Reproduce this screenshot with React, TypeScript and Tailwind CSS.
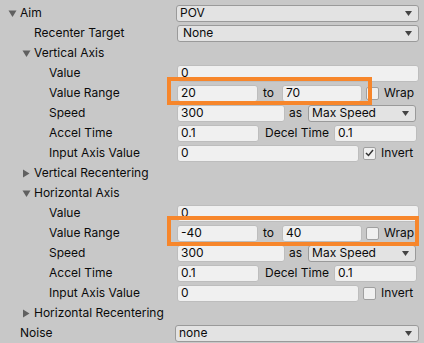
import React from "react";

const Tri = ({ down }: { down: boolean }) =>
  down ? (
    <svg width="9" height="9" viewBox="0 0 9 9" className="shrink-0">
      <path d="M0.5 1.5 L8.5 1.5 L4.5 8 Z" fill="#606060" />
    </svg>
  ) : (
    <svg width="9" height="9" viewBox="0 0 9 9" className="shrink-0">
      <path d="M1 0.5 L7.5 4.5 L1 8.5 Z" fill="#606060" />
    </svg>
  );

const Field = ({ v, className = "" }: { v: string; className?: string }) => (
  <div
    className={
      "h-[17px] rounded-[3px] border border-[#bdbdbd] bg-[#f0f0f0] pl-[3px] flex items-center text-[12px] text-[#0b0b0b] shrink-0 " +
      className
    }
  >
    {v}
  </div>
);

const Drop = ({ v, className = "", pl = "pl-[3px]" }: { v: string; className?: string; pl?: string }) => (
  <div
    className={
      "h-[17px] rounded-[3px] border border-[#9a9a9a] bg-[#e3e3e3] flex items-center justify-between pr-[6px] text-[12px] text-[#0b0b0b] shrink-0 " +
      pl +
      " " +
      className
    }
  >
    <span>{v}</span>
    <svg width="7" height="5" viewBox="0 0 7 5">
      <path d="M0 0 L7 0 L3.5 5 Z" fill="#444" />
    </svg>
  </div>
);

const Check = ({ checked, className = "" }: { checked?: boolean; className?: string }) => (
  <div
    className={
      "w-[13px] h-[13px] rounded-[2px] border border-[#a0a0a0] bg-[#f0f0f0] flex items-center justify-center shrink-0 " +
      className
    }
  >
    {checked && (
      <svg width="9" height="8" viewBox="0 0 9 8">
        <path d="M1 4 L3.5 6.5 L8 1" stroke="#333" strokeWidth="1.5" fill="none" />
      </svg>
    )}
  </div>
);

const Row = ({
  label,
  indent,
  tri,
  children,
}: {
  label: string;
  indent: string;
  tri?: "down" | "right";
  children?: React.ReactNode;
}) => (
  <div className="h-[20px] flex items-center">
    <div className={"w-[177px] shrink-0 flex items-center " + indent}>
      {tri && (
        <div className="w-[12px] flex items-center">
          <Tri down={tri === "down"} />
        </div>
      )}
      <span className="text-[12px] text-[#0b0b0b] whitespace-nowrap">{label}</span>
    </div>
    <div className="flex-1 flex items-center">{children}</div>
  </div>
);

const AxisRows = ({
  min,
  max,
  invert,
}: {
  min: string;
  max: string;
  invert: boolean;
}) => (
  <>
    <Row label="Value" indent="pl-[49px]">
      <Field v="0" className="w-[242px]" />
    </Row>
    <Row label="Value Range" indent="pl-[49px]">
      <Field v={min} className="w-[81px]" />
      <span className="text-[12px] text-[#0b0b0b] ml-[5px] mr-[8px]">to</span>
      <Field v={max} className="w-[80px]" />
      <Check className="ml-[4px]" />
      <span className="text-[12px] text-[#0b0b0b] ml-[5px]">Wrap</span>
    </Row>
    <Row label="Speed" indent="pl-[49px]">
      <Field v="300" className="w-[108px]" />
      <span className="text-[12px] text-[#0b0b0b] ml-[4px] mr-[6px]">as</span>
      <Drop v="Max Speed" className="w-[108px]" />
    </Row>
    <Row label="Accel Time" indent="pl-[49px]">
      <Field v="0.1" className="w-[82px]" />
      <span className="text-[12px] text-[#0b0b0b] ml-[6px] mr-[5px] whitespace-nowrap">Decel Time</span>
      <Field v="0.1" className="w-[83px]" />
    </Row>
    <Row label="Input Axis Value" indent="pl-[49px]">
      <Field v="0" className="w-[182px]" />
      <Check checked={invert} className="ml-[4px]" />
      <span className="text-[12px] text-[#0b0b0b] ml-[5px]">Invert</span>
    </Row>
  </>
);

export default function App() {
  return (
    <div
      className="relative w-[424px] h-[343px] bg-[#c8c8c8] overflow-hidden pt-[3px]"
      style={{ fontFamily: "Inter, 'Noto Sans', sans-serif" }}
    >
      <Row label="Aim" indent="pl-[8px]" tri="down">
        <Drop v="POV" className="w-[243px] -ml-[1px]" pl="pl-[3px]" />
      </Row>
      <Row label="Recenter Target" indent="pl-[34px]">
        <Drop v="None" className="w-[242px]" pl="pl-[5px]" />
      </Row>
      <Row label="Vertical Axis" indent="pl-[22px]" tri="down" />
      <AxisRows min="20" max="70" invert={true} />
      <Row label="Vertical Recentering" indent="pl-[22px]" tri="right" />
      <Row label="Horizontal Axis" indent="pl-[22px]" tri="down" />
      <AxisRows min="-40" max="40" invert={false} />
      <Row label="Horizontal Recentering" indent="pl-[22px]" tri="right" />
      <Row label="Noise" indent="pl-[20px]">
        <Drop v="none" className="w-[244px] -ml-[2px]" />
      </Row>

      <div className="absolute left-[167px] top-[77px] w-[205px] h-[28px] border-[4px] border-[#f7862b]" />
      <div className="absolute left-[167px] top-[216px] w-[252px] h-[30px] border-[4px] border-[#f7862b]" />
    </div>
  );
}
